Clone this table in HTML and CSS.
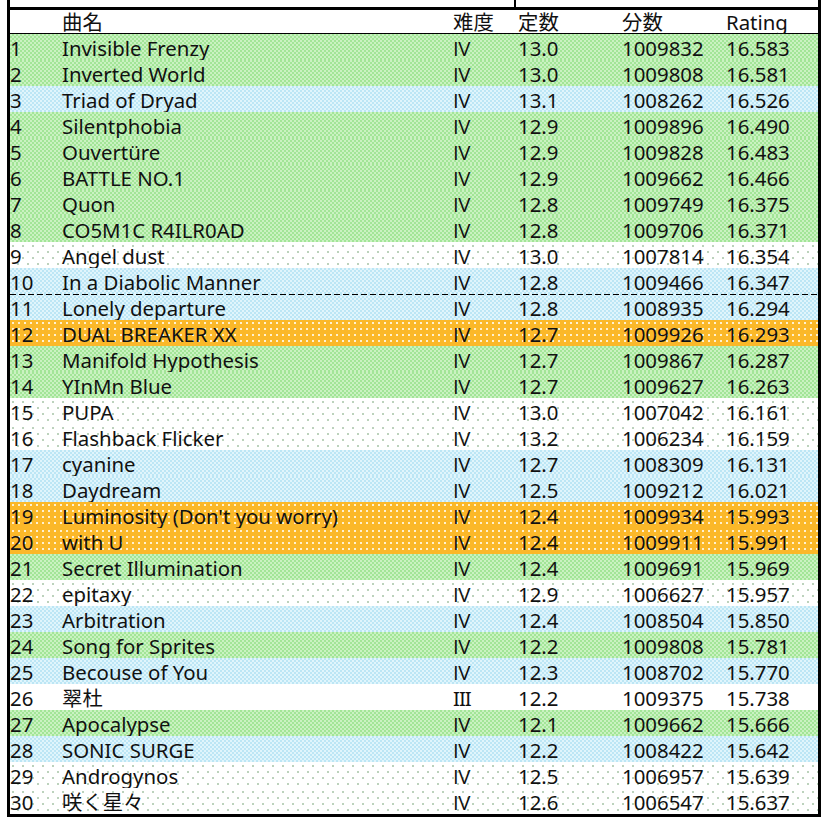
FILE: index.html
```html
<!DOCTYPE html>
<html lang="ja">
<head>
<meta charset="utf-8">
<title>Best 30</title>
<link rel="stylesheet" href="styles.css">
</head>
<body>
<div class="sheet">
  <div class="prev"><div class="prev-left"></div><div class="prev-right"></div></div>
  <div class="row head"><span></span><span>曲名</span><span>难度</span><span>定数</span><span>分数</span><span>Rating</span></div>
  <div class="row g"><span>1</span><span>Invisible Frenzy</span><span>IV</span><span>13.0</span><span>1009832</span><span>16.583</span></div>
  <div class="row g"><span>2</span><span>Inverted World</span><span>IV</span><span>13.0</span><span>1009808</span><span>16.581</span></div>
  <div class="row b"><span>3</span><span>Triad of Dryad</span><span>IV</span><span>13.1</span><span>1008262</span><span>16.526</span></div>
  <div class="row g"><span>4</span><span>Silentphobia</span><span>IV</span><span>12.9</span><span>1009896</span><span>16.490</span></div>
  <div class="row g"><span>5</span><span>Ouvertüre</span><span>IV</span><span>12.9</span><span>1009828</span><span>16.483</span></div>
  <div class="row g"><span>6</span><span>BATTLE NO.1</span><span>IV</span><span>12.9</span><span>1009662</span><span>16.466</span></div>
  <div class="row g"><span>7</span><span>Quon</span><span>IV</span><span>12.8</span><span>1009749</span><span>16.375</span></div>
  <div class="row g"><span>8</span><span>CO5M1C R4ILR0AD</span><span>IV</span><span>12.8</span><span>1009706</span><span>16.371</span></div>
  <div class="row w"><span>9</span><span>Angel dust</span><span>IV</span><span>13.0</span><span>1007814</span><span>16.354</span></div>
  <div class="row b"><span>10</span><span>In a Diabolic Manner</span><span>IV</span><span>12.8</span><span>1009466</span><span>16.347</span></div>
  <div class="row b cut"><span>11</span><span>Lonely departure</span><span>IV</span><span>12.8</span><span>1008935</span><span>16.294</span></div>
  <div class="row o"><span>12</span><span>DUAL BREAKER XX</span><span>IV</span><span>12.7</span><span>1009926</span><span>16.293</span></div>
  <div class="row g"><span>13</span><span>Manifold Hypothesis</span><span>IV</span><span>12.7</span><span>1009867</span><span>16.287</span></div>
  <div class="row g"><span>14</span><span>YInMn Blue</span><span>IV</span><span>12.7</span><span>1009627</span><span>16.263</span></div>
  <div class="row w"><span>15</span><span>PUPA</span><span>IV</span><span>13.0</span><span>1007042</span><span>16.161</span></div>
  <div class="row w"><span>16</span><span>Flashback Flicker</span><span>IV</span><span>13.2</span><span>1006234</span><span>16.159</span></div>
  <div class="row b"><span>17</span><span>cyanine</span><span>IV</span><span>12.7</span><span>1008309</span><span>16.131</span></div>
  <div class="row b"><span>18</span><span>Daydream</span><span>IV</span><span>12.5</span><span>1009212</span><span>16.021</span></div>
  <div class="row o"><span>19</span><span>Luminosity (Don't you worry)</span><span>IV</span><span>12.4</span><span>1009934</span><span>15.993</span></div>
  <div class="row o"><span>20</span><span>with U</span><span>IV</span><span>12.4</span><span>1009911</span><span>15.991</span></div>
  <div class="row g"><span>21</span><span>Secret Illumination</span><span>IV</span><span>12.4</span><span>1009691</span><span>15.969</span></div>
  <div class="row w"><span>22</span><span>epitaxy</span><span>IV</span><span>12.9</span><span>1006627</span><span>15.957</span></div>
  <div class="row b"><span>23</span><span>Arbitration</span><span>IV</span><span>12.4</span><span>1008504</span><span>15.850</span></div>
  <div class="row g"><span>24</span><span>Song for Sprites</span><span>IV</span><span>12.2</span><span>1009808</span><span>15.781</span></div>
  <div class="row b"><span>25</span><span>Becouse of You</span><span>IV</span><span>12.3</span><span>1008702</span><span>15.770</span></div>
  <div class="row p"><span>26</span><span>翠杜</span><span class="iii">III</span><span>12.2</span><span>1009375</span><span>15.738</span></div>
  <div class="row g"><span>27</span><span>Apocalypse</span><span>IV</span><span>12.1</span><span>1009662</span><span>15.666</span></div>
  <div class="row b"><span>28</span><span>SONIC SURGE</span><span>IV</span><span>12.2</span><span>1008422</span><span>15.642</span></div>
  <div class="row w"><span>29</span><span>Androgynos</span><span>IV</span><span>12.5</span><span>1006957</span><span>15.639</span></div>
  <div class="row w"><span>30</span><span>咲く星々</span><span>IV</span><span>12.6</span><span>1006547</span><span>15.637</span></div>
</div>
</body>
</html>
```

FILE: styles.css
```css
html, body {
  margin: 0;
  padding: 0;
  background: #ffffff;
}

body {
  font-family: "Noto Sans", "Noto Sans CJK JP", sans-serif;
  font-size: 20.4px;
  color: #111111;
}

.sheet {
  margin-left: 7px;
  width: 808px;
  border-left: 3px solid #000;
  border-right: 3px solid #000;
  border-bottom: 3px solid #000;
}

.prev {
  display: flex;
  height: 7px;
  border-bottom: 3px solid #000;
}

.prev-left {
  width: 504px;
  border-right: 2px solid #000;
}

.prev-right {
  flex: 1;
}

.row {
  position: relative;
  display: grid;
  grid-template-columns: 52px 391px 65px 104px 104px 1fr;
  height: 26px;
  line-height: 26px;
  box-sizing: border-box;
  white-space: nowrap;
}

.row span {
  display: block;
  padding-top: 1px;
}

.row span:nth-child(3) {
  font-family: "Open Sans", "Noto Sans CJK JP", sans-serif;
  letter-spacing: -0.5px;
}

.head span:nth-child(3) {
  font-family: "Noto Sans", "Noto Sans CJK JP", sans-serif;
  letter-spacing: 0;
}

.row span.iii {
  font-family: "Noto Sans", "Noto Sans CJK JP", sans-serif;
  letter-spacing: -1px;
}

.head {
  height: 24px;
  line-height: 24px;
  border-bottom: 1px solid #000;
  background: #fff;
}

.head span {
  padding-top: 0;
}

.g {
  background-color: #caf2c1;
  background-image: conic-gradient(#a2e597 25%, transparent 0 50%, #a2e597 0 75%, transparent 0);
  background-size: 4px 4px;
}

.b {
  background-color: #e0f5fc;
  background-image: conic-gradient(#bce6f5 25%, transparent 0 50%, #bce6f5 0 75%, transparent 0);
  background-size: 4px 4px;
}

.w {
  background-color: #ffffff;
  background-image:
    conic-gradient(from 270deg at 2px 2px, #bcd2bc 25%, transparent 0),
    conic-gradient(from 270deg at 2px 2px, #bcd2bc 25%, transparent 0);
  background-size: 10px 12px, 10px 12px;
  background-position: 2px 3px, 7px 9px;
}

.p {
  background-color: #ffffff;
}

.o {
  background-color: #fbb829;
  background-image: conic-gradient(from 270deg at 2px 2px, #fff1cf 25%, transparent 0);
  background-size: 6px 6px;
  background-position: 2px 2px;
}

.cut::before {
  content: "";
  position: absolute;
  left: 0;
  right: 0;
  top: 0;
  height: 1px;
  background: repeating-linear-gradient(to right, #000 0 6px, transparent 6px 9px);
}
```
